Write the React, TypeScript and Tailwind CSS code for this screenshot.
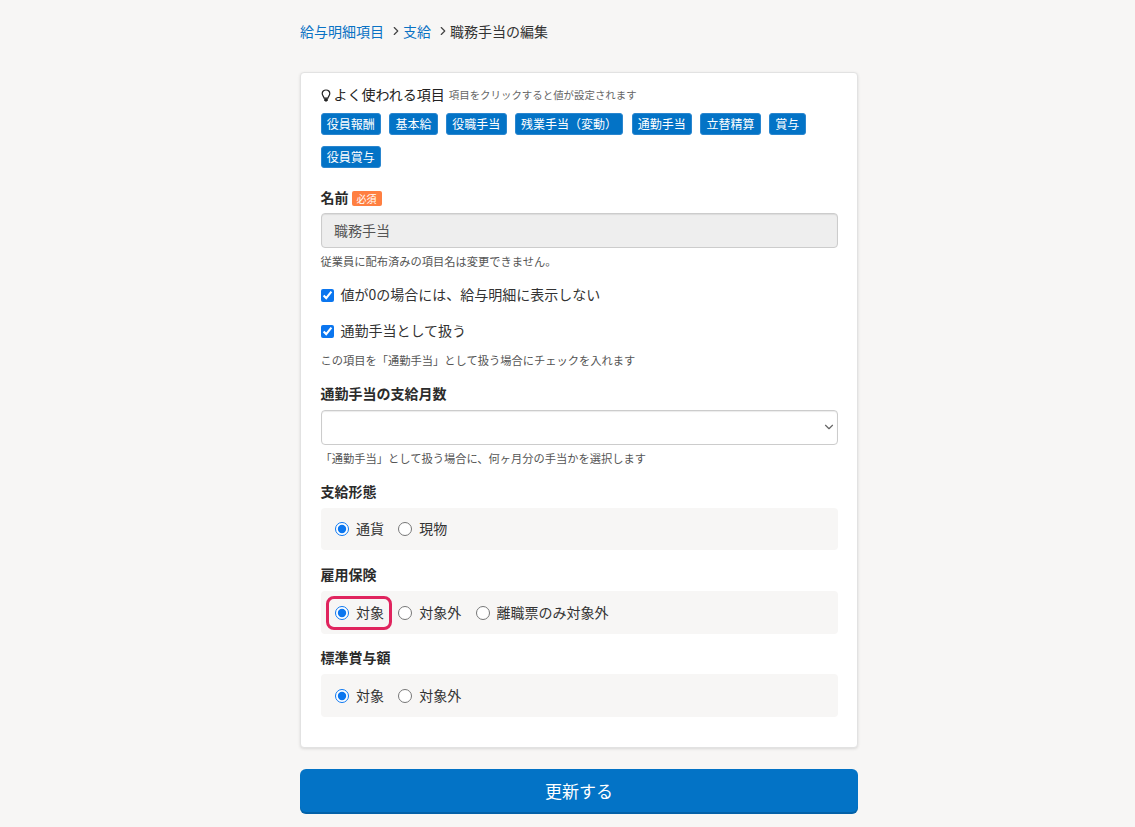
import React from 'react';
import { ChevronDown, ChevronRight } from 'lucide-react';

const presets = ['役員報酬', '基本給', '役職手当', '残業手当（変動）', '通勤手当', '立替精算', '賞与', '役員賞与'];

const Label: React.FC<{ children: React.ReactNode }> = ({ children }) => (
  <label className="block pb-[2px] text-[14px] leading-[18px] font-bold text-[#2b2b2b]">{children}</label>
);

const Hint: React.FC<{ className?: string; children: React.ReactNode }> = ({ className = '', children }) => (
  <p className={`text-[11.25px] leading-[16px] text-[#555] ${className}`}>{children}</p>
);

type RadioOption = { label: string; checked?: boolean; highlight?: boolean };

const RadioGroup: React.FC<{ name: string; options: RadioOption[]; className?: string }> = ({ name, options, className = '' }) => (
  <div className={`flex items-center gap-[14.25px] rounded-[4px] bg-[#f7f6f5] px-[14.5px] ${className}`}>
    {options.map((opt) => (
      <label key={opt.label} className="relative flex h-[20px] items-center gap-[7px] text-[14px] text-[#333]">
        <input
          type="radio"
          name={name}
          defaultChecked={opt.checked}
          className="m-0 h-[14px] w-[14px] accent-[#0b76ef]"
        />
        <span className="pb-[2px] leading-[18px]">{opt.label}</span>
        {opt.highlight && (
          <span className="pointer-events-none absolute -top-[7px] -bottom-[7px] -left-[9.5px] -right-[7.5px] rounded-[8px] border-[3px] border-[#e0245e]" />
        )}
      </label>
    ))}
  </div>
);

const BulbIcon: React.FC = () => (
  <svg viewBox="0 0 10 13" className="mr-[3px] h-[13px] w-[10px] shrink-0" aria-hidden="true">
    <path
      d="M5 1C2.8 1 1.2 2.6 1.2 4.6c0 1.9 1.5 2.8 1.9 4.6h3.8c.4-1.8 1.9-2.7 1.9-4.6C8.8 2.6 7.2 1 5 1z"
      fill="none"
      stroke="#222"
      strokeWidth="1.2"
    />
    <path d="M3.2 9.6h3.6v1.7L5.8 12.6H4.2L3.2 11.3z" fill="#222" />
  </svg>
);

const App: React.FC = () => {
  return (
    <div className="min-h-[827px] bg-[#f7f6f5] font-['Noto_Sans_CJK_JP','Noto_Sans',sans-serif] text-[#333]">
      <div className="ml-[300px] w-[558px] pb-[13px] pt-[21px]">
        <nav className="flex h-[20px] items-center text-[14px] leading-[20px]">
          <a className="text-[#0a72c4]">給与明細項目</a>
          <ChevronRight className="ml-[5px] h-[14px] w-[14px] text-[#444]" strokeWidth={2} />
          <a className="text-[#0a72c4]">支給</a>
          <ChevronRight className="ml-[5px] h-[14px] w-[14px] text-[#444]" strokeWidth={2} />
          <span>職務手当の編集</span>
        </nav>

        <section className="mt-[31px] h-[676px] rounded-[4px] border border-[#e2e2e2] bg-white px-[19.5px] pt-[12px] shadow-[0_1px_3px_rgba(0,0,0,0.12)]">
          <div className="flex h-[20px] items-center">
            <BulbIcon />
            <span className="pb-[2px] text-[14px] leading-[18px] text-[#222]">よく使われる項目</span>
            <span className="ml-[4px] text-[10.45px] leading-[20px] text-[#666]">項目をクリックすると値が設定されます</span>
          </div>

          <div className="mt-[8px] flex flex-wrap gap-x-[8.25px] gap-y-[11px]">
            {presets.map((p) => (
              <button
                key={p}
                type="button"
                className="h-[22px] rounded-[3px] border border-[#2a86cf] bg-[#0373c6] px-[5.25px] text-[12px] leading-[20px] text-white"
              >
                {p}
              </button>
            ))}
          </div>

          <div className="mt-[20px] flex h-[20px] items-center gap-[3px]">
            <Label>名前</Label>
            <span className="h-[15px] rounded-[2px] bg-[#ff7f41] px-[5px] text-[10px] leading-[15px] text-white">必須</span>
          </div>
          <input
            type="text"
            disabled
            value="職務手当"
            className="mt-[5px] block h-[35px] w-full rounded-[4px] border border-[#ccc] bg-[#eee] px-[12.5px] pb-[2px] text-[14px] text-[#555] opacity-100 shadow-[inset_0_1px_1px_rgba(0,0,0,0.08)]"
          />
          <Hint className="mt-[5px]">従業員に配布済みの項目名は変更できません。</Hint>

          <label className="mt-[16px] flex h-[20px] items-center gap-[7px] text-[14px]">
            <input type="checkbox" defaultChecked className="m-0 h-[13px] w-[13px] accent-[#0b76ef]" />
            <span className="pb-[2px] leading-[18px]">値が0の場合には、給与明細に表示しない</span>
          </label>
          <label className="mt-[16px] flex h-[20px] items-center gap-[7px] text-[14px]">
            <input type="checkbox" defaultChecked className="m-0 h-[13px] w-[13px] accent-[#0b76ef]" />
            <span className="pb-[2px] leading-[18px]">通勤手当として扱う</span>
          </label>
          <Hint className="mt-[11px]">この項目を「通勤手当」として扱う場合にチェックを入れます</Hint>

          <div className="mt-[16px]">
            <Label>通勤手当の支給月数</Label>
          </div>
          <div className="relative mt-[6px]">
            <select className="block h-[35px] w-full appearance-none rounded-[4px] border border-[#ccc] bg-white text-[14px] shadow-[inset_0_1px_1px_rgba(0,0,0,0.08)]" />
            <ChevronDown className="pointer-events-none absolute right-[2px] top-[10px] h-[14px] w-[14px] text-[#666]" strokeWidth={2} />
          </div>
          <Hint className="mt-[5px]">「通勤手当」として扱う場合に、何ヶ月分の手当かを選択します</Hint>

          <div className="mt-[16px]">
            <Label>支給形態</Label>
          </div>
          <RadioGroup
            name="payment"
            className="mt-[6px] h-[42px]"
            options={[{ label: '通貨', checked: true }, { label: '現物' }]}
          />

          <div className="mt-[15px]">
            <Label>雇用保険</Label>
          </div>
          <RadioGroup
            name="insurance"
            className="mt-[6px] h-[43px]"
            options={[{ label: '対象', checked: true, highlight: true }, { label: '対象外' }, { label: '離職票のみ対象外' }]}
          />

          <div className="mt-[14px]">
            <Label>標準賞与額</Label>
          </div>
          <RadioGroup
            name="bonus"
            className="mt-[6px] h-[43px]"
            options={[{ label: '対象', checked: true }, { label: '対象外' }]}
          />
        </section>

        <button
          type="button"
          className="mt-[21px] block h-[45px] w-full rounded-[6px] bg-[#0373c6] pb-[2px] text-[17px] text-white shadow-[inset_0_-2px_0_rgba(0,0,0,0.15)]"
        >
          更新する
        </button>
      </div>
    </div>
  );
};

export default App;
